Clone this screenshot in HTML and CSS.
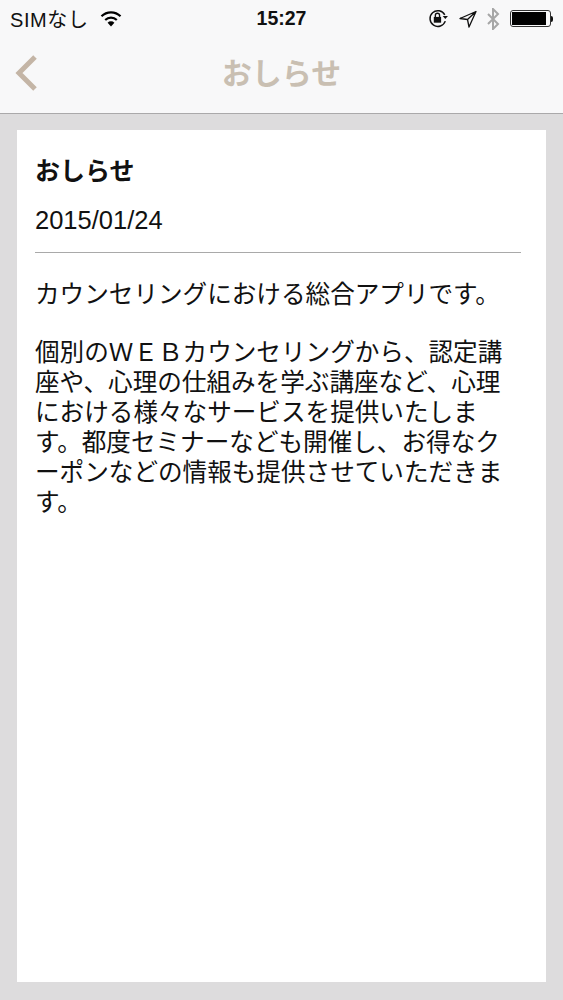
FILE: index.html
```html
<!DOCTYPE html>
<html lang="ja">
<head>
<meta charset="utf-8">
<title>おしらせ</title>
<link rel="stylesheet" href="styles.css">
</head>
<body>
<header class="top">
  <div class="status">
    <div class="status-left">
      <span class="carrier">SIMなし</span>
      <svg class="wifi" width="24" height="18" viewBox="0 0 24 18">
        <path d="M12 16.500l-3.400-3.800a4.800 4.800 0 0 1 6.800 0z" fill="#000"/>
        <path d="M6.200 10a8.400 8.400 0 0 1 11.600 0" fill="none" stroke="#000" stroke-width="2.200"/>
        <path d="M2.500 6.300a13.400 13.400 0 0 1 19 0" fill="none" stroke="#000" stroke-width="2.200"/>
      </svg>
    </div>
    <span class="time">15:27</span>
    <div class="status-right">
      <svg width="23" height="21" viewBox="0 0 22 20">
        <path d="M17.500 12.500A7.500 7.500 0 1 1 17 6.500" fill="none" stroke="#111" stroke-width="1.400"/>
        <path d="M15 7.500h5l-2.500 3z" fill="#111"/>
        <rect x="6.500" y="8.500" width="7" height="5.500" fill="#111"/>
        <path d="M8 8.500V7a2 2 0 0 1 4 0v1.500" fill="none" stroke="#111" stroke-width="1.300"/>
      </svg>
      <svg class="loc" width="18" height="18" viewBox="0 0 18 18">
        <path d="M17 1.500L1 8.500l7.500 1 1.500 7.500zM8.500 9.500L17 1.500" fill="none" stroke="#111" stroke-width="1.300" stroke-linejoin="round"/>
      </svg>
      <svg class="bt" width="14" height="22" viewBox="0 0 14 22">
        <path d="M2 6l10 10-5 5V1l5 5L2 16" fill="none" stroke="#a6a6a6" stroke-width="2"/>
      </svg>
      <div class="battery"><div class="battery-fill"></div></div>
      <div class="battery-tip"></div>
    </div>
  </div>
  <nav class="nav">
    <svg class="back" width="26" height="38" viewBox="0 0 26 38">
      <path d="M22 3L6 19l16 16" fill="none" stroke="#c4b5a6" stroke-width="5"/>
    </svg>
    <h1 class="nav-title">おしらせ</h1>
  </nav>
</header>
<main class="page">
  <article class="card">
    <h2 class="title">おしらせ</h2>
    <p class="date">2015/01/24</p>
    <hr class="rule">
    <p class="body">カウンセリングにおける総合アプリです。</p>
    <p class="body gap">個別のＷＥＢカウンセリングから、認定講座や、心理の仕組みを学ぶ講座など、心理における様々なサービスを提供いたします。都度セミナーなども開催し、お得なクーポンなどの情報も提供させていただきます。</p>
  </article>
</main>
</body>
</html>
```
FILE: styles.css
```css
* { box-sizing: border-box; }
html, body { margin: 0; padding: 0; }
body {
  width: 563px;
  height: 1000px;
  overflow: hidden;
  background: #dddcdd;
  color: #111;
  font-family: "Liberation Sans", "Noto Sans CJK JP", sans-serif;
  display: flex;
  flex-direction: column;
}
.top {
  height: 114px;
  background: #f8f8f9;
  border-bottom: 1.5px solid #aaa9aa;
  flex: none;
}
.status {
  height: 37px;
  padding: 0 10px;
  display: flex;
  align-items: center;
  justify-content: space-between;
  position: relative;
  font-size: 20px;
  color: #111;
}
.status-left { display: flex; align-items: center; gap: 10px; }
.carrier { letter-spacing: 0.6px; }
.time {
  position: absolute;
  left: 0;
  right: 0;
  text-align: center;
  font-weight: 700;
  font-size: 19.500px;
}
.status-right { display: flex; align-items: center; }
.loc { margin-left: 9px; }
.bt { margin-left: 9px; }
.battery {
  margin-left: 10px;
  width: 41px;
  height: 17px;
  border: 1px solid #333;
  border-radius: 3px;
  padding: 1px;
}
.battery-fill { width: 34px; height: 100%; background: #000; }
.battery-tip { width: 2px; height: 6px; background: #111; border-radius: 0 2px 2px 0; }
.nav {
  height: 76px;
  display: flex;
  align-items: center;
  justify-content: center;
  position: relative;
}
.back { position: absolute; left: 13px; top: 17px; }
.nav-title {
  margin: 0 0 8px;
  font-size: 30px;
  font-weight: 700;
  color: #c9bfb2;
}
.page {
  flex: 1;
  padding: 16px 17px 18px 17px;
  display: flex;
  min-height: 0;
}
.card {
  flex: 1;
  background: #fff;
  padding: 24px 25px 0 18px;
}
.title {
  margin: 0;
  font-size: 25px;
  line-height: 34px;
  font-weight: 700;
}
.date {
  margin: 15px 0 0;
  font-size: 25.500px;
  line-height: 34px;
}
.rule {
  margin: 15px 0 0;
  border: 0;
  border-top: 1.5px solid #a9a9a9;
}
.body {
  margin: 27px 0 0;
  font-size: 24.600px;
  line-height: 30px;
  line-break: loose;
}
.gap { margin-top: 28px; }
```
